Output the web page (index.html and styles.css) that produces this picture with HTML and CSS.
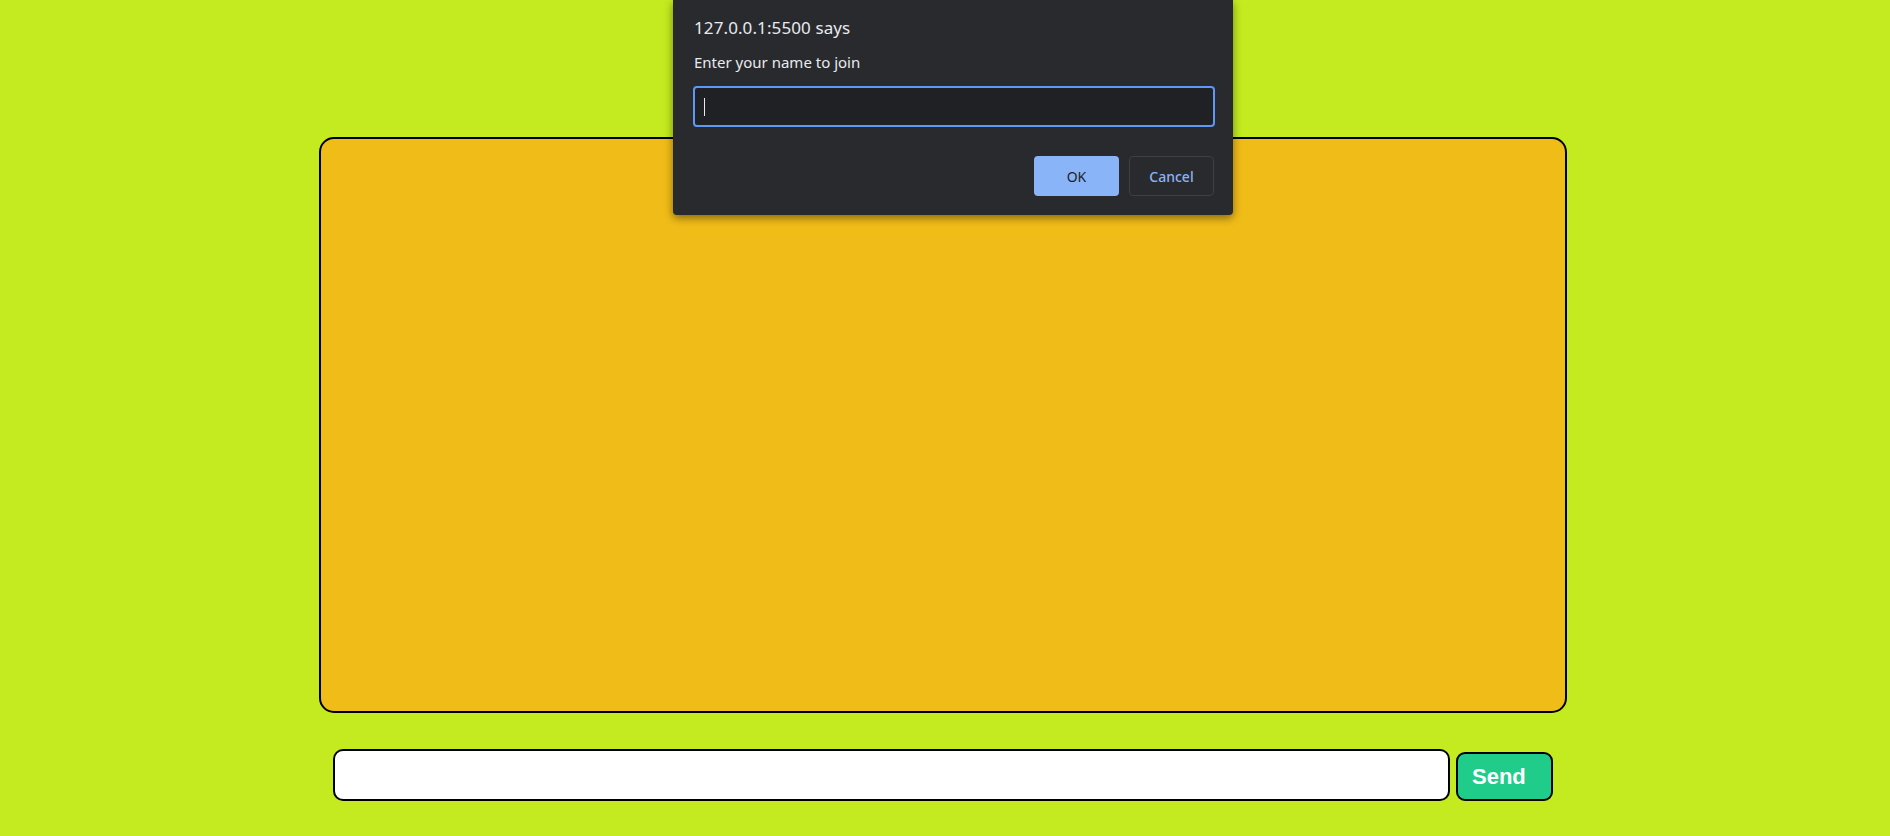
FILE: index.html
```html
<!DOCTYPE html>
<html>
<head>
<meta charset="utf-8">
<title>Chat</title>
<link rel="stylesheet" href="styles.css">
</head>
<body>
<main class="app">
  <section class="chat-box"></section>
  <form class="send-form" onsubmit="return false">
    <input class="msg-input" type="text">
    <button class="send-btn" type="submit">Send</button>
  </form>
</main>
<div class="prompt">
  <div class="prompt-title">127.0.0.1:5500 says</div>
  <div class="prompt-msg">Enter your name to join</div>
  <div class="prompt-field"><span class="caret"></span></div>
  <div class="prompt-actions">
    <button class="btn-ok">OK</button>
    <button class="btn-cancel">Cancel</button>
  </div>
</div>
</body>
</html>
```
FILE: styles.css
```css
html, body {
  margin: 0;
  padding: 0;
}
body {
  background: #c3eb1f;
  width: 1890px;
  height: 836px;
  overflow: hidden;
  font-family: "Liberation Sans", Arial, sans-serif;
}
.app {
  width: 1248px;
  margin: 137px 0 0 319px;
  display: flex;
  flex-direction: column;
  align-items: center;
}
.chat-box {
  box-sizing: border-box;
  width: 1248px;
  height: 576px;
  background: #f0bc18;
  border: 2px solid #000;
  border-radius: 15px;
}
.send-form {
  width: 1220px;
  margin-top: 36px;
  display: flex;
  align-items: flex-end;
  gap: 6px;
}
.msg-input {
  box-sizing: border-box;
  width: 1117px;
  height: 52px;
  border: 2px solid #000;
  border-radius: 10px;
  background: #fff;
  outline: none;
}
.send-btn {
  box-sizing: border-box;
  width: 97px;
  height: 49px;
  background: #20cc8a;
  border: 2px solid #000;
  border-radius: 9px;
  color: #fff;
  font-family: "Liberation Sans", Arial, sans-serif;
  font-weight: bold;
  font-size: 22px;
  text-align: left;
  padding: 0 0 0 14px;
}
.prompt {
  position: absolute;
  left: 673px;
  top: 0;
  box-sizing: border-box;
  width: 560px;
  height: 215px;
  padding: 0 18px 0 20px;
  background: #292a2d;
  border-radius: 0 0 4px 4px;
  box-shadow: 0 3px 8px rgba(0, 0, 0, 0.45);
  font-family: "Noto Sans", "Open Sans", sans-serif;
  color: #e8eaed;
}
.prompt-title {
  font-size: 17px;
  padding-top: 16px;
  line-height: 24px;
  padding-left: 1px;
  letter-spacing: 0.1px;
}
.prompt-msg {
  font-size: 15px;
  margin-top: 12px;
  line-height: 20px;
  padding-left: 1px;
}
.prompt-field {
  box-sizing: border-box;
  margin-top: 14px;
  height: 41px;
  border: 2px solid #5e97f6;
  border-radius: 4px;
  background: #202124;
  display: flex;
  align-items: center;
  padding-left: 9px;
}
.caret {
  width: 1px;
  height: 18px;
  background: #e8eaed;
}
.prompt-actions {
  display: flex;
  justify-content: flex-end;
  gap: 10px;
  margin-top: 29px;
  padding-right: 1px;
}
.prompt-actions button {
  box-sizing: border-box;
  width: 85px;
  height: 40px;
  border-radius: 4px;
  font-family: "Noto Sans", "Open Sans", sans-serif;
  font-size: 14px;
}
.btn-ok {
  background: #8ab4f8;
  border: none;
  color: #202124;
}
.btn-cancel {
  background: #292a2d;
  border: 1px solid #3c4043;
  color: #8ab4f8;
  font-weight: 500;
}
```
